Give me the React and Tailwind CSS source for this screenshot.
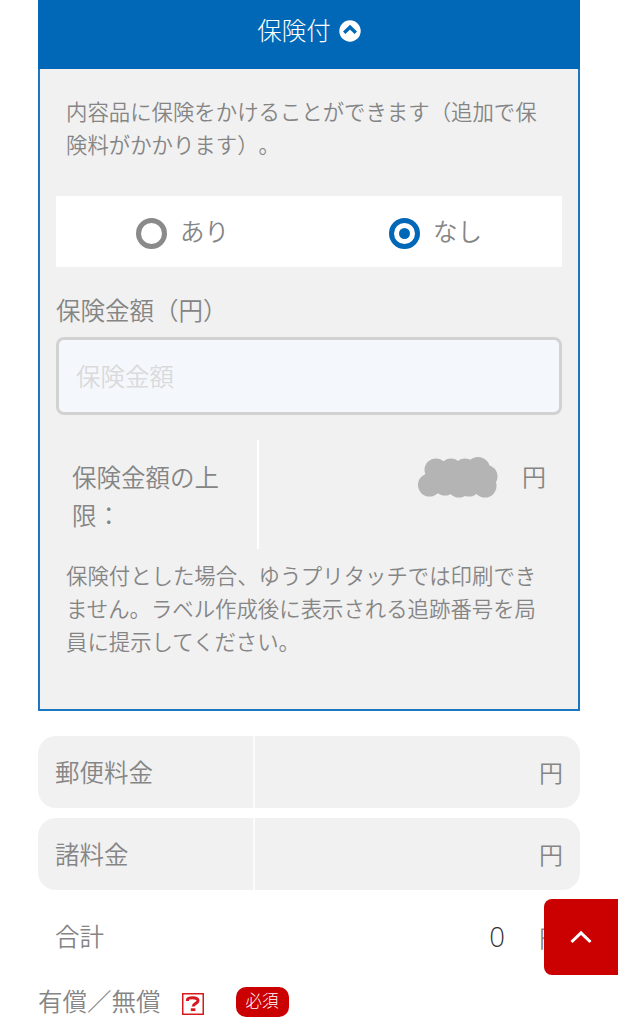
import React from 'react';

const Yen = () => <span className="w-[24px] text-center text-[24px]">円</span>;

const FeeRow = ({ label }) => (
  <div className="flex h-[72px] overflow-hidden rounded-[18px] bg-[#f1f1f1]">
    <div className="flex w-[217px] items-center border-r-2 border-[#fafcff] pt-px pl-[17px]">{label}</div>
    <div className="flex flex-1 items-center justify-end pr-[17px] pb-px">
      <Yen />
    </div>
  </div>
);

const Radio = ({ label, checked }) => (
  <label className="flex flex-1 items-center gap-[13px] pl-20">
    {checked ? (
      <span className="mt-[3px] flex size-[31px] items-center justify-center rounded-full border-5 border-[#0068b7]">
        <span className="size-[11px] rounded-full bg-[#0068b7]" />
      </span>
    ) : (
      <span className="mt-[3px] size-[31px] rounded-full border-5 border-[#8a8a8a]" />
    )}
    <span className="pb-px">{label}</span>
  </label>
);

const MaskedAmount = () => (
  <svg width="80" height="41" viewBox="0 0 80 41" fill="#b4b4b4">
    <circle cx="11.500" cy="28" r="11.500" />
    <circle cx="18" cy="13" r="11.500" />
    <circle cx="33" cy="13" r="11.500" />
    <circle cx="47" cy="13" r="11.500" />
    <circle cx="60" cy="12" r="12" />
    <circle cx="68" cy="19.500" r="11.500" />
    <circle cx="67" cy="29" r="11.500" />
    <circle cx="51" cy="28" r="11.500" />
    <circle cx="41" cy="29" r="11.500" />
    <circle cx="27" cy="27" r="11.500" />
    <rect x="14" y="12" width="54" height="20" />
  </svg>
);

const InsurancePanel = () => (
  <section className="h-[711px]">
    <h2 className="flex h-[69px] items-center justify-center gap-[8px] bg-[#0068b7] pb-2 font-light text-white">
      <span>保険付</span>
      <svg width="22" height="22" viewBox="0 0 22 22">
        <circle cx="11" cy="11" r="10.7" fill="#fff" />
        <path d="M5.200 12.800L11 7.200L16.800 12.800" fill="none" stroke="#0068b7" strokeWidth="3.400" />
      </svg>
    </h2>
    <div className="h-[642px] border-2 border-t-0 border-[#1c77c0] bg-[#f1f1f1] px-4 pt-[25px]">
      <p className="pl-[10px] text-[21.4px] leading-[33px] whitespace-nowrap">
        内容品に保険をかけることができます（追加で保
        <br />
        険料がかかります）。
      </p>
      <div className="mt-[36px] flex h-[71px] bg-white">
        <Radio label="あり" />
        <Radio label="なし" checked />
      </div>
      <div className="mt-[24px] h-[38px] leading-[38px]">保険金額（円）</div>
      <div className="mt-[8px] flex h-[78px] items-center rounded-[8px] border-3 border-[#d2d2d2] bg-[#f4f8fd] pl-[17px] text-[#dadada]">
        保険金額
      </div>
      <div className="mt-[25px] flex h-[109px]">
        <div className="w-[203px] border-r-2 border-white pt-[18px] pl-[16px] leading-[38px]">
          保険金額の上
          <br />
          限：
        </div>
        <div className="flex flex-1 items-start justify-end gap-6 pt-[17px] pr-4 leading-[38px]">
          <MaskedAmount />
          <Yen />
        </div>
      </div>
      <p className="mt-[9px] pl-[10px] text-[21.4px] leading-[33px] whitespace-nowrap">
        保険付とした場合、ゆうプリタッチでは印刷でき
        <br />
        ません。ラベル作成後に表示される追跡番号を局
        <br />
        員に提示してください。
      </p>
    </div>
  </section>
);

export default function App() {
  return (
    <div className="relative h-[1024px] w-[618px] overflow-hidden bg-white pr-[38px] pl-[38px] font-['Noto_Sans_CJK_JP',sans-serif] text-[24.5px] font-[350] text-[#858585] [text-spacing-trim:space-all]">
      <InsurancePanel />

      <div className="mt-[25px] flex flex-col gap-[10px]">
        <FeeRow label="郵便料金" />
        <FeeRow label="諸料金" />
        <div className="flex h-[72px] items-center justify-between pt-px pr-[17px] pl-[17px]">
          <span>合計</span>
          <span className="flex items-center gap-[34px]">
            <span className="font-['Open_Sans',sans-serif] text-[27.500px] font-light text-[#333]">0</span>
            <Yen />
          </span>
        </div>
      </div>

      <div className="mt-[10px] flex h-[40px] items-center">
        <span className="pb-[2px]">有償／無償</span>
        <svg className="mt-[4px] ml-[21px]" width="22" height="22" viewBox="0 0 22 22" fill="none" stroke="#d7191f">
          <rect x="0.75" y="0.75" width="20.500" height="20.500" strokeWidth="1.500" />
          <path d="M5.500 8V6.800C5.500 5 7.500 4.800 10.500 4.800C14 4.800 16 5.500 16 7.800C16 10.500 11.200 10.300 11.200 13.600" strokeWidth="3" />
          <path d="M8.800 16.700H13.400" strokeWidth="2.800" />
        </svg>
        <span className="ml-[32px] flex h-[30px] w-[53px] items-center justify-center rounded-[10px] bg-[#cb0000] pb-[3px] text-[16.500px] font-light text-white">
          必須
        </span>
      </div>

      {/* back to top */}
      <button className="absolute top-[899px] right-0 flex h-[76px] w-[74px] items-center justify-center rounded-l-[8px] bg-[#cb0000]">
        <svg width="22" height="14" viewBox="0 0 22 14" fill="none" stroke="#fff" strokeWidth="3">
          <path d="M1.500 12L11 2.800L20.500 12" />
        </svg>
      </button>
    </div>
  );
}
